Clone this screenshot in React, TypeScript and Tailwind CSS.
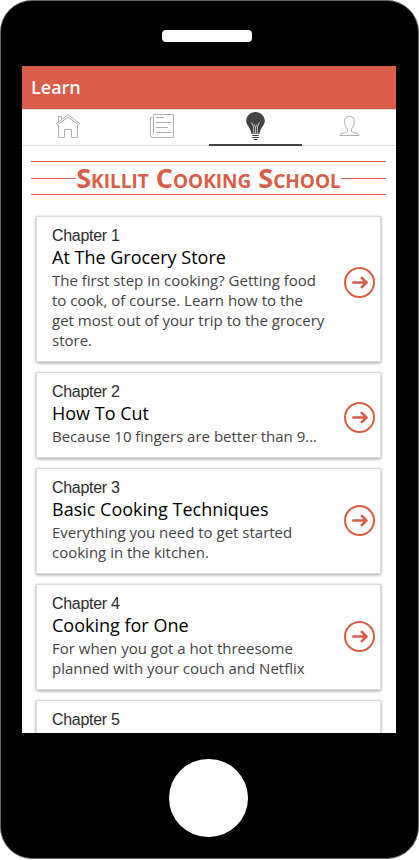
import React from "react";

type Chapter = {
  number: number;
  title: string;
  lines: string[];
  height: string;
  arrow: string;
};

const chapters: Chapter[] = [
  {
    number: 1,
    title: "At The Grocery Store",
    lines: [
      "The first step in cooking? Getting food",
      "to cook, of course. Learn how to the",
      "get most out of your trip to the grocery",
      "store.",
    ],
    height: "h-[146px]",
    arrow: "mt-[50px]",
  },
  {
    number: 2,
    title: "How To Cut",
    lines: ["Because 10 fingers are better than 9..."],
    height: "h-[86px]",
    arrow: "mt-[29px]",
  },
  {
    number: 3,
    title: "Basic Cooking Techniques",
    lines: ["Everything you need to get started", "cooking in the kitchen."],
    height: "h-[106px]",
    arrow: "mt-[36px]",
  },
  {
    number: 4,
    title: "Cooking for One",
    lines: ["For when you got a hot threesome", "planned with your couch and Netflix"],
    height: "h-[106px]",
    arrow: "mt-[36px]",
  },
  { number: 5, title: "", lines: [], height: "h-[106px]", arrow: "mt-[36px]" },
];

function HomeIcon() {
  return (
    <svg width="24" height="24" viewBox="0 0 24 24" fill="none" stroke="#b0b0b0" strokeWidth="1">
      <path d="M2.5 11.5V23.5H8.5V15.5H15.5V23.5H21.5V11.5" />
      <path d="M.5 9.5L12 .6L23.5 9.5L22.5 10.7L12 3.2L1.5 10.7Z" />
      <path d="M2.5 8V2.5H5.5V5.5" />
    </svg>
  );
}

function ListIcon() {
  return (
    <svg width="24" height="24" viewBox="0 0 24 24" fill="none" stroke="#b0b0b0" strokeWidth="1">
      <path d="M3.5 .5H23.5V23.5H2.5Q.5 23.5 .5 21.5V3.5H2.5" />
      <path d="M3.5 .5V20.5" />
      <path d="M6 3.5H14M6 8.5H21M6 13.5H18M6 18.5H21" />
    </svg>
  );
}

function BulbIcon() {
  return (
    <svg width="19" height="28" viewBox="0 0 19 28" fill="none">
      <path
        d="M9.5 0C4.2 0 .2 4 .2 9.1C.2 13.6 5 16 5.3 21.8H13.7C14 16 18.8 13.6 18.8 9.1C18.8 4 14.8 0 9.5 0Z"
        fill="#444"
      />
      <path d="M7.6 21.5V15L5.6 10.5M11.4 21.5V15L13.4 10.5M9.5 21.5V15L8 12.5M9.5 15L11 12.5" stroke="#ddd" strokeWidth=".8" />
      <path d="M6.2 23.5H12.8M6.2 25.5H12.8M7.4 27.5H11.6" stroke="#444" strokeWidth="1" />
    </svg>
  );
}

function UserIcon() {
  return (
    <svg width="21" height="22" viewBox="0 0 21 22" fill="none" stroke="#b0b0b0" strokeWidth="1">
      <path d="M8.5 14.3C6.6 12.3 5.6 9.5 5.6 6.4C5.6 3 7.2 1.4 10.4 1.4C13.6 1.4 15.2 3 15.2 6.4C15.2 9.5 14.2 12.3 12.3 14.3V16.3C13.8 18.4 19.7 17.6 20 20.5H.8C1.1 17.6 7 18.4 8.5 16.3Z" />
    </svg>
  );
}

function ArrowIcon() {
  return (
    <svg width="31" height="31" viewBox="0 0 31 31" fill="none" stroke="#d95d49">
      <circle cx="15.5" cy="15.5" r="14.5" strokeWidth="2" />
      <path d="M9.3 15.5H22.3M17.8 10.9L22.5 15.5L17.8 20.1" strokeWidth="2.7" strokeLinecap="round" strokeLinejoin="round" />
    </svg>
  );
}

function ChapterCard({ chapter }: { chapter: Chapter }) {
  return (
    <article
      className={`flex shrink-0 justify-between border border-[#dadada] bg-white pr-[5px] pl-[15px] shadow-[0_1px_3px_rgba(0,0,0,0.38)] ${chapter.height}`}
    >
      <div className="whitespace-nowrap pt-[8px]">
        <p className="font-['Liberation_Sans',sans-serif] text-[16px] leading-[22px] tracking-[-0.3px] text-[#2b2b2b]">
          Chapter {chapter.number}
        </p>
        <h2 className="-mt-px text-[18px] leading-[22px] text-black">{chapter.title}</h2>
        <div className="pt-[2px] text-[15px] leading-[20px] text-[#444]">
          {chapter.lines.map((line) => (
            <p key={line}>{line}</p>
          ))}
        </div>
      </div>
      {chapter.title && (
        <div className={`w-[31px] shrink-0 ${chapter.arrow}`}>
          <ArrowIcon />
        </div>
      )}
    </article>
  );
}

export default function App() {
  return (
    <div className="h-[860px] w-[419px] overflow-hidden bg-white font-['Open_Sans',sans-serif]">
      <div className="flex h-[859px] w-[419px] flex-col rounded-[32px] border border-[#666] bg-black px-[21px]">
        <div className="flex h-[65px] shrink-0 justify-center pt-[29px] pr-[5px]">
          <div className="h-[12px] w-[90px] rounded-[4px] bg-white" />
        </div>
        <main className="flex h-[667px] w-[374px] shrink-0 flex-col overflow-hidden bg-white">
          <header className="flex h-[43px] shrink-0 items-center bg-[#d95d49] pl-[9px] text-[18px] font-semibold text-white">
            Learn
          </header>
          <nav className="grid h-[37px] shrink-0 grid-cols-[94px_93px_93px_94px] border-t border-b border-[#dcdcdc]">
            <div className="flex justify-center pt-[4px] pr-[2px]"><HomeIcon /></div>
            <div className="flex justify-center pt-[4px] pr-[1px]"><ListIcon /></div>
            <div className="-mb-px flex justify-center border-b-2 border-[#444] pt-[2px]"><BulbIcon /></div>
            <div className="flex justify-center pt-[5px]"><UserIcon /></div>
          </nav>
          <div className="mx-[9px] mt-[15px] flex h-[34px] w-[355px] shrink-0 flex-col">
            <span className="h-px shrink-0 bg-[#d95d49]" />
            <div className="flex h-[32px] items-center">
              <span className="h-px flex-1 bg-[#d95d49]" />
              <h1 className="text-[27px] leading-[32px] font-bold whitespace-nowrap text-[#d95d49] [font-variant:small-caps]">
                Skillit Cooking School
              </h1>
              <span className="h-px flex-1 bg-[#d95d49]" />
            </div>
            <span className="h-px shrink-0 bg-[#d95d49]" />
          </div>
          <section className="flex flex-col gap-[10px] pt-[21px] pr-[15px] pl-[14px]">
            {chapters.map((chapter) => (
              <ChapterCard key={chapter.number} chapter={chapter} />
            ))}
          </section>
        </main>
        <div className="flex justify-center pt-[26px] pr-[3px]">
          <div className="h-[78px] w-[79px] rounded-full bg-white" />
        </div>
      </div>
    </div>
  );
}
